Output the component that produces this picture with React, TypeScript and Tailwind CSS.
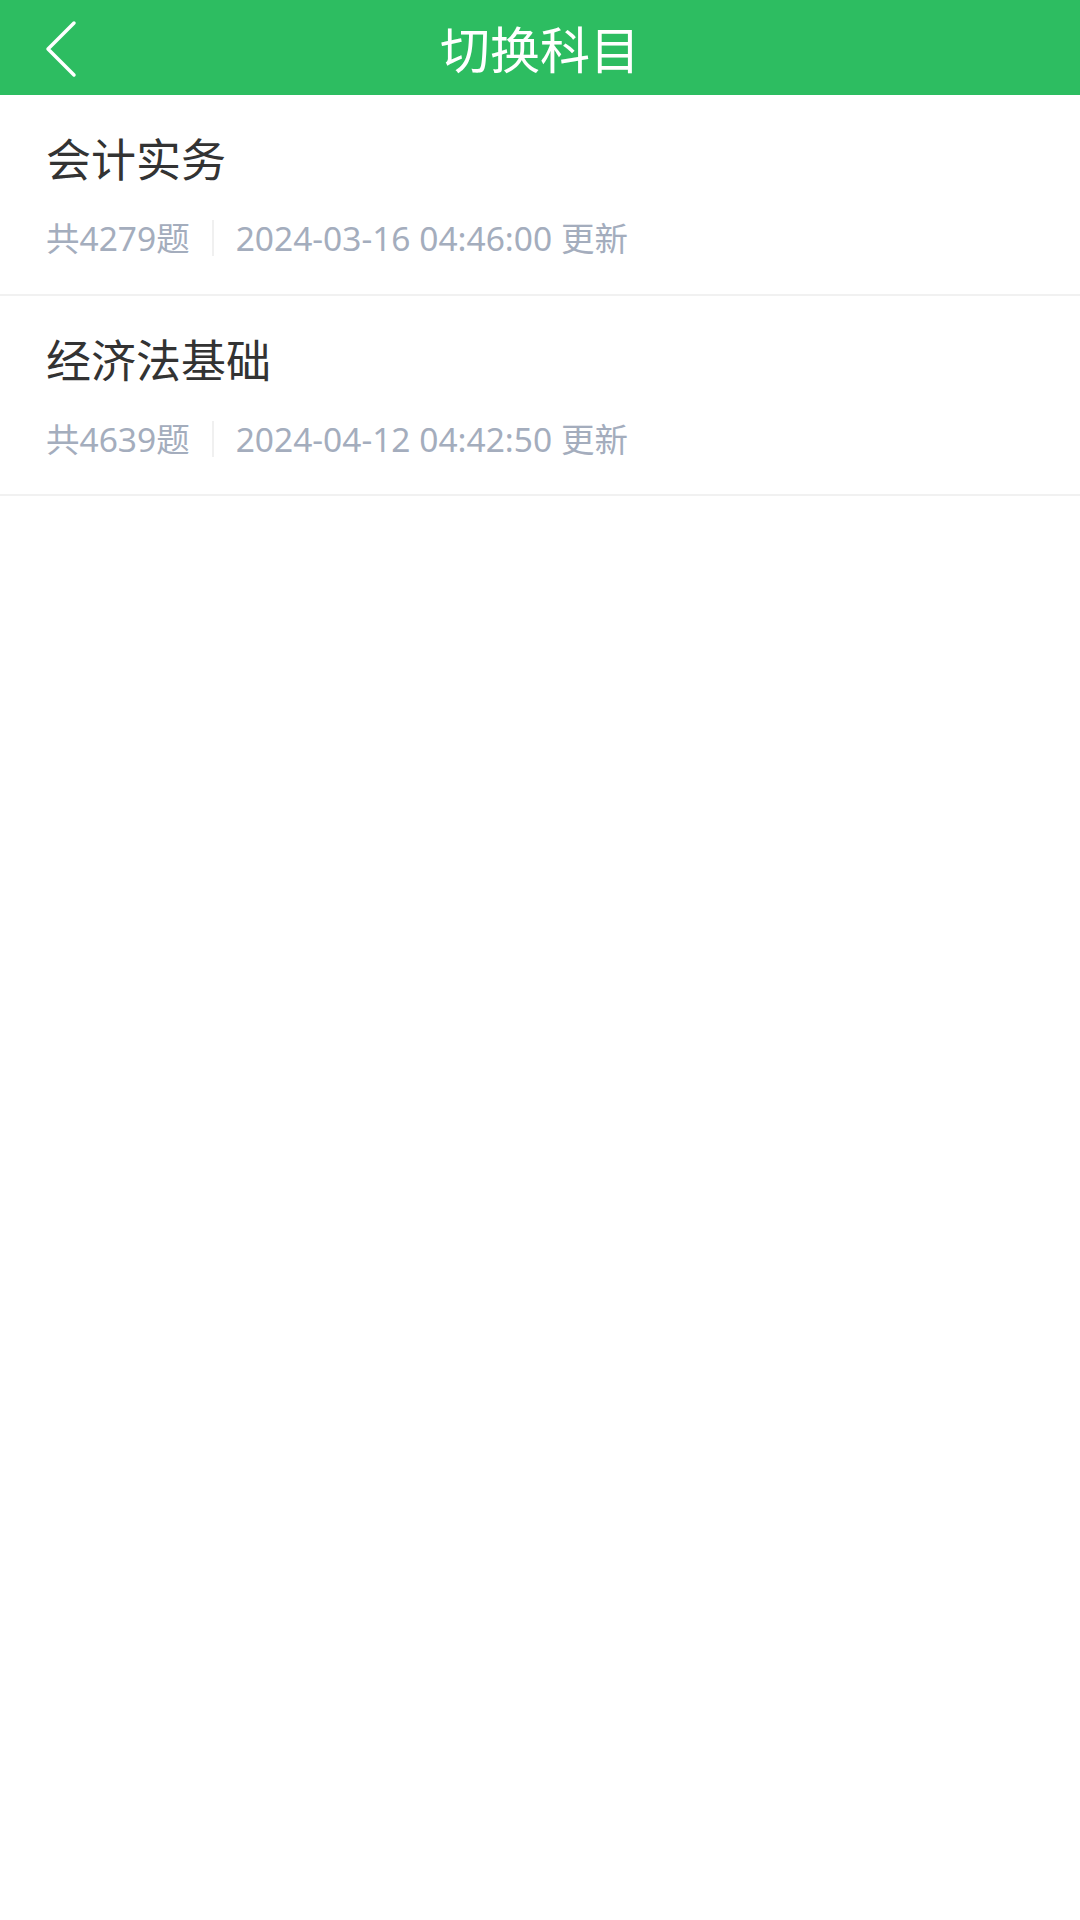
import React from 'react';

interface Subject {
  name: string;
  count: number;
  updatedAt: string;
}

const SUBJECTS: Subject[] = [
  { name: '会计实务', count: 4279, updatedAt: '2024-03-16 04:46:00' },
  { name: '经济法基础', count: 4639, updatedAt: '2024-04-12 04:42:50' },
];

const FONT = { fontFamily: '"Noto Sans", "Noto Sans CJK SC", sans-serif' };

function BackIcon() {
  return (
    <svg width="40" height="60" viewBox="0 0 40 60" fill="none">
      <path
        d="M29 3 L3 29 L29 55"
        stroke="white"
        strokeWidth="3.5"
        strokeLinecap="round"
        strokeLinejoin="round"
      />
    </svg>
  );
}

export default function App() {
  return (
    <div className="min-h-[1920px] w-[1080px] bg-white" style={FONT}>
      <header className="relative flex h-[95px] items-center justify-center bg-[#2dbd61]">
        <button className="absolute left-[45px] top-[20px]">
          <BackIcon />
        </button>
        <h1 className="pt-[4px] text-[50px] leading-none text-white">切换科目</h1>
      </header>

      <ul>
        {SUBJECTS.map((s) => (
          <li
            key={s.name}
            className="flex h-[200px] flex-col border-b-2 border-[#f1f1f1] px-[46px] pt-[38px] first:h-[201px]"
          >
            <p className="text-[45px] leading-[54px] text-[#333333]">{s.name}</p>
            <div className="mt-[31px] flex items-center text-[33.5px] leading-[40px] text-[#a4adbd]">
              <span>共{s.count}题</span>
              <span className="mx-[22px] h-[36px] w-[2px] bg-[#f0f0f0]" />
              <span>{s.updatedAt} 更新</span>
            </div>
          </li>
        ))}
      </ul>
    </div>
  );
}
